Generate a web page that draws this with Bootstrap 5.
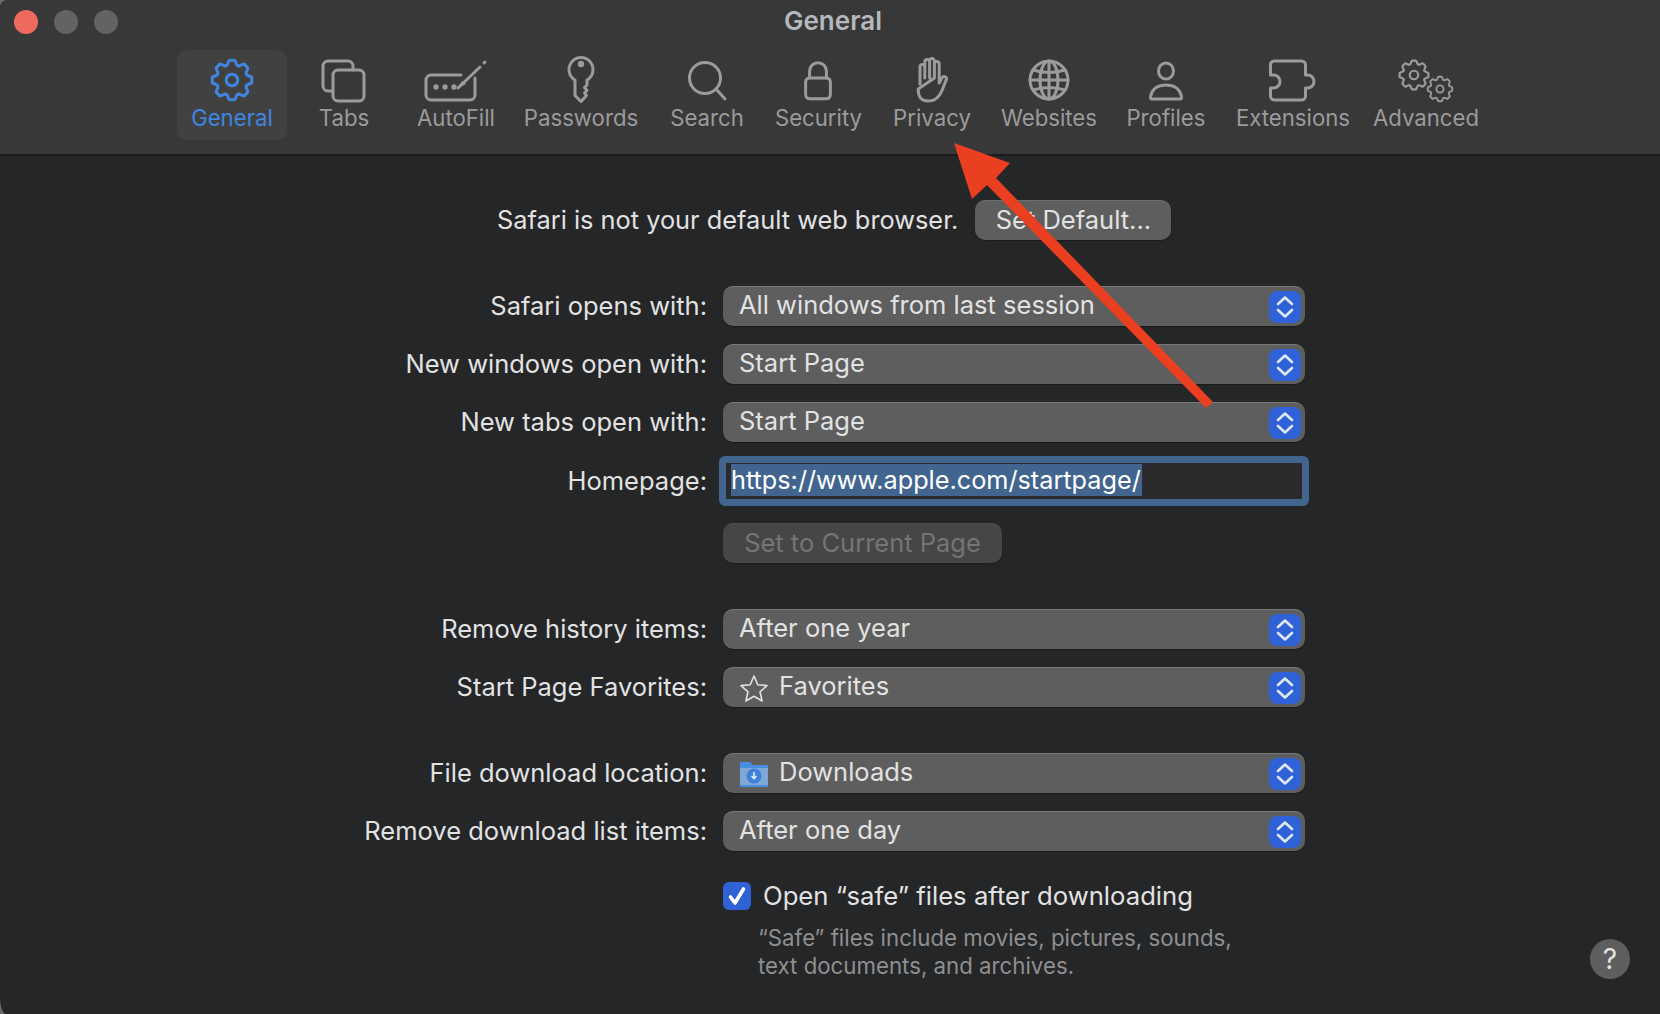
<!DOCTYPE html>
<html lang="en">
<head>
<meta charset="utf-8">
<title>General</title>
<link href="https://cdn.jsdelivr.net/npm/bootstrap@5.3.0/dist/css/bootstrap.min.css" rel="stylesheet">
<style>
html,body{height:100%;}
body{background:#6a6a6a;font-family:Inter,"Liberation Sans",sans-serif;color:#e2e2e2;font-size:25.5px;overflow:hidden;}
.win{position:relative;width:1660px;height:1014px;overflow:hidden;background:#252628;border-top-left-radius:8px;border-bottom-left-radius:6px 17px;}
.bar{height:156px;background:#383838;border-bottom:2px solid #1b1b1c;position:relative;}
.lights{padding:10px 0 0 14px;gap:16px;}
.light{width:24px;height:24px;border-radius:50%;background:#636363;}
.light-red{background:#ee6a5f;}
.wintitle{position:absolute;left:0;right:0;top:5px;margin-left:6px;text-align:center;font-size:26px;font-weight:600;color:#b6b9bc;line-height:32px;}
.tools{position:absolute;left:177px;top:50px;height:90px;}
.tool{height:90px;color:#9b9b9b;font-size:22.2px;line-height:26px;text-align:center;display:flex;flex-direction:column;align-items:center;}
.tool svg{display:block;height:56px;width:100%;}
.tool span{display:block;white-space:nowrap;margin-top:-1px;}
.tool-on{background:#414141;border-radius:10px;color:#3f86e2;}
.ws{fill:none;stroke:currentColor;stroke-width:3;stroke-linecap:round;stroke-linejoin:round;}
.gap-ext{margin-left:6px;}
.prefs{padding-top:44px;}
.topline{height:40px;margin-left:497px;gap:17px;font-size:25.35px;}
.lab{width:707px;text-align:right;white-space:nowrap;color:#e2e2e2;flex:none;}
.frow{height:40px;gap:16px;}
.pop{width:582px;height:40px;background:#5e5e5e;border-top:1px solid #787878;border-radius:10px;padding:0 4px 0 16px;color:#e2e2e2;box-shadow:0 1px 1px #1b1b1b;}
.pop>span{margin-top:-2px;}
.pop-ico{padding-left:16px;}
.pop-ico svg.glyph{flex:none;margin-right:10px;}
.stepper{width:32px;height:32px;background:#2f62d6;border-radius:8px;flex:none;}
.stepper svg{display:block;}
.pbtn{background:#5e5e5e;color:#e2e2e2;border:0;border-top:1px solid #6e6e6e;border-radius:10px;font-size:25.5px;height:40px;line-height:36px;padding:0 0 2px;box-shadow:0 1px 1px #1b1b1b;}
.pbtn-def{width:196px;}
.pbtn-off{width:279px;}
.pbtn-off:disabled{background:#464646;color:#757575;opacity:1;border-top-color:#4e4e4e;}
.mt-g{margin-top:18px;}
.mt-s{margin-top:46px;}
.focus{width:590px;height:50px;background:#2b2b2d;border:7px solid #41658f;border-radius:6px;padding:1px 0 0 5px;line-height:32px;font-size:25.25px;}
.sel{background:#41658f;color:#fff;display:inline-block;height:32px;line-height:32px;padding:0 1px 0 0;}
.homerow{margin-top:14px;gap:12px;height:50px;}
.setrow{margin-top:16px;padding-left:723px;}
.chkrow{margin-top:31px;padding-left:723px;gap:12px;height:28px;font-size:25.7px;}
.chkrow span{margin-top:1px;}
.form-check-input.chk{width:28px;height:28px;margin:0;background-color:#2f62d6;border:0;border-radius:6px;flex:none;background-size:28px;opacity:1;background-image:url("data:image/svg+xml,%3csvg xmlns='http://www.w3.org/2000/svg' viewBox='0 0 28 28'%3e%3cpath fill='none' stroke='%23fff' stroke-width='3.600' stroke-linecap='round' stroke-linejoin='round' d='M7.500 15l4.500 6 8.500-14'/%3e%3c/svg%3e");}
.note{padding-left:758px;margin-top:14px;font-size:22.25px;line-height:28px;color:#8f8f8f;}
.help{position:absolute;left:1590px;top:939px;width:40px;height:40px;border-radius:50%;background:#5e5e5e;color:#e2e2e2;font-size:28px;line-height:41px;text-align:center;}
.arrow{position:absolute;left:0;top:0;width:1660px;height:1014px;pointer-events:none;}
</style>
</head>
<body>
<svg width="0" height="0" class="position-absolute">
<defs>
<path id="cog-seg" d="M-5.9-14.3Q-4.6-15-4.2-16.4L-3.5-18.6Q-3.1-19.8-1.9-19.8H1.9Q3.1-19.8 3.5-18.6L4.2-16.4Q4.6-15 5.9-14.3"/>
<g id="cog">
<use href="#cog-seg"/><use href="#cog-seg" transform="rotate(45)"/><use href="#cog-seg" transform="rotate(90)"/><use href="#cog-seg" transform="rotate(135)"/><use href="#cog-seg" transform="rotate(180)"/><use href="#cog-seg" transform="rotate(225)"/><use href="#cog-seg" transform="rotate(270)"/><use href="#cog-seg" transform="rotate(315)"/>
<circle r="5.8"/>
</g>
<g id="updown"><path d="M9 13 16 6.500l7 6.500M9 19 16 25.500l7-6.500" fill="none" stroke="#dfe6f7" stroke-width="2.600" stroke-linecap="round" stroke-linejoin="round"/></g>
</defs>
</svg>
<div class="win">
  <header class="bar">
    <div class="d-flex lights"><div class="light light-red"></div><div class="light"></div><div class="light"></div></div>
    <div class="wintitle">General</div>
    <nav class="tools d-flex">
      <div class="tool tool-on" style="width:110px"><svg viewBox="0 0 110 56"><g class="ws" transform="translate(55 30)"><use href="#cog"/></g></svg><span>General</span></div>
      <div class="tool" style="width:114px"><svg viewBox="0 0 114 56"><g class="ws"><path d="M45 41h-4a5 5 0 0 1-5-5V16a5 5 0 0 1 5-5h20a5 5 0 0 1 5 5v4"/><rect x="46" y="20" width="31" height="31" rx="5"/></g></svg><span>Tabs</span></div>
      <div class="tool" style="width:110px"><svg viewBox="0 0 110 56"><g class="ws"><path d="M60 25H30a5 5 0 0 0-5 5v15a5 5 0 0 0 5 5h39a5 5 0 0 0 5-5V28"/><path d="M57 38 79 17"/><path d="M83 13 84 12"/></g><g fill="currentColor"><circle cx="35" cy="37" r="2.700"/><circle cx="44" cy="37" r="2.700"/><circle cx="53" cy="37" r="2.700"/></g><path d="M56 39 61 31 65 34z" fill="currentColor"/></svg><span>AutoFill</span></div>
      <div class="tool" style="width:140px"><svg viewBox="0 0 140 56"><g class="ws"><path d="M64 30a12 12 0 1 1 12 0v5l-2.500 2.500 2.500 3-2.500 2.500 2 2.500-5.500 6-6-6z"/></g><circle cx="70" cy="14" r="3.200" fill="currentColor"/></svg><span>Passwords</span></div>
      <div class="tool" style="width:112px"><svg viewBox="0 0 112 56"><g class="ws"><circle cx="54" cy="28" r="15.500"/><path d="M65 39 74 49"/></g></svg><span>Search</span></div>
      <div class="tool" style="width:111px"><svg viewBox="0 0 112 56"><g class="ws"><rect x="43" y="28" width="25" height="21" rx="4"/><path d="M47 28V21a8.500 8.500 0 0 1 17 0v7"/></g></svg><span>Security</span></div>
      <div class="tool" style="width:116px"><svg viewBox="0 0 116 56"><g class="ws" stroke-width="2.300"><path d="M46 34V17a2.400 2.400 0 0 1 4.800 0v11M50.800 28V12a2.400 2.400 0 0 1 4.800 0v16M55.600 28V11a2.400 2.400 0 0 1 4.800 0v17M60.400 28V14a2.400 2.400 0 0 1 4.800 0v19l2.500-5c2-3 6-1 4.500 2-2 4-3 9-6 14-3 5-7 7-12 7-8 0-10-5-10-12z"/></g></svg><span>Privacy</span></div>
      <div class="tool" style="width:118px"><svg viewBox="0 0 118 56"><g class="ws" stroke-width="2.600"><circle cx="59" cy="30" r="19"/><ellipse cx="59" cy="30" rx="9" ry="19"/><path d="M59 11v38M40 30h38M43 20q16 5 32 0M43 40q16-5 32 0"/></g></svg><span>Websites</span></div>
      <div class="tool" style="width:116px"><svg viewBox="0 0 116 56"><g class="ws"><ellipse cx="58" cy="21" rx="7.500" ry="8"/><path d="M44 49q-2 0-1.500-2.500C44 38 51 35 58 35s14 3 15.500 11.500Q74 49 72 49z"/></g></svg><span>Profiles</span></div>
      <div class="tool gap-ext" style="width:126px"><svg viewBox="0 0 126 56"><g class="ws"><path d="M40.500 16a4 4 0 0 1 4-5h27a4 4 0 0 1 4 4v10h2a6.500 6.500 0 1 1 0 13h-2v8a4 4 0 0 1-4 4h-27a4 4 0 0 1-4-4v-8h3a6.500 6.500 0 1 0 0-13h-3z"/></g></svg><span>Extensions</span></div>
      <div class="tool" style="width:140px"><svg viewBox="0 0 140 56"><g class="ws" stroke-width="3.800"><g transform="translate(58 25) scale(.73)"><use href="#cog"/></g><g transform="translate(84 39) scale(.62)"><use href="#cog"/></g></g></svg><span>Advanced</span></div>
    </nav>
  </header>
  <main class="prefs">
    <div class="d-flex align-items-center topline"><span>Safari is not your default web browser.</span><button class="btn pbtn pbtn-def" type="button">Set Default...</button></div>
    <div class="d-flex align-items-center frow mt-s"><div class="lab">Safari opens with:</div><div class="pop d-flex align-items-center justify-content-between"><span>All windows from last session</span><div class="stepper"><svg width="32" height="32"><use href="#updown"/></svg></div></div></div>
    <div class="d-flex align-items-center frow mt-g"><div class="lab">New windows open with:</div><div class="pop d-flex align-items-center justify-content-between"><span>Start Page</span><div class="stepper"><svg width="32" height="32"><use href="#updown"/></svg></div></div></div>
    <div class="d-flex align-items-center frow mt-g"><div class="lab">New tabs open with:</div><div class="pop d-flex align-items-center justify-content-between"><span>Start Page</span><div class="stepper"><svg width="32" height="32"><use href="#updown"/></svg></div></div></div>
    <div class="d-flex align-items-center homerow"><div class="lab">Homepage:</div><div class="focus"><span class="sel">https://www.apple.com/startpage/</span></div></div>
    <div class="setrow"><button class="btn pbtn pbtn-off" type="button" disabled>Set to Current Page</button></div>
    <div class="d-flex align-items-center frow mt-s"><div class="lab">Remove history items:</div><div class="pop d-flex align-items-center justify-content-between"><span>After one year</span><div class="stepper"><svg width="32" height="32"><use href="#updown"/></svg></div></div></div>
    <div class="d-flex align-items-center frow mt-g"><div class="lab">Start Page Favorites:</div><div class="pop pop-ico d-flex align-items-center"><svg class="glyph" width="30" height="28" viewBox="0 0 30 28"><path d="M15 2l3.800 8.700 9.200.9-7 6.200 2.100 9.200L15 22.200l-8.100 4.800L9 17.800 2 11.600l9.200-.9z" fill="none" stroke="#e2e2e2" stroke-width="1.600" stroke-linejoin="round"/></svg><span class="flex-grow-1">Favorites</span><div class="stepper"><svg width="32" height="32"><use href="#updown"/></svg></div></div></div>
    <div class="d-flex align-items-center frow mt-s"><div class="lab">File download location:</div><div class="pop pop-ico d-flex align-items-center"><svg class="glyph" width="30" height="28" viewBox="0 0 30 28"><path d="M1 3a1 1 0 0 1 1-1h9l3 3h15v22H1z" fill="#4a8ee2"/><path d="M1 8h28v17H1z" fill="#7fa8d8"/><circle cx="15" cy="16" r="7.500" fill="#3d82d8"/><path d="M15 12v6M12.500 16l2.500 2.500 2.500-2.500" fill="none" stroke="#dfe9f7" stroke-width="1.600"/></svg><span class="flex-grow-1">Downloads</span><div class="stepper"><svg width="32" height="32"><use href="#updown"/></svg></div></div></div>
    <div class="d-flex align-items-center frow mt-g"><div class="lab">Remove download list items:</div><div class="pop d-flex align-items-center justify-content-between"><span>After one day</span><div class="stepper"><svg width="32" height="32"><use href="#updown"/></svg></div></div></div>
    <div class="d-flex align-items-center chkrow"><input class="form-check-input chk" type="checkbox" checked aria-label="Open safe files"><span>Open “safe” files after downloading</span></div>
    <div class="note">“Safe” files include movies, pictures, sounds,<br>text documents, and archives.</div>
  </main>
  <div class="help">?</div>
  <svg class="arrow" viewBox="0 0 1660 1014"><path d="M954 143 1010 163 996 178 1213 402 1206 408 987 185 972 199z" fill="#ea3f20"/></svg>
</div>
<script src="https://cdn.jsdelivr.net/npm/bootstrap@5.3.0/dist/js/bootstrap.bundle.min.js"></script>
</body>
</html>
